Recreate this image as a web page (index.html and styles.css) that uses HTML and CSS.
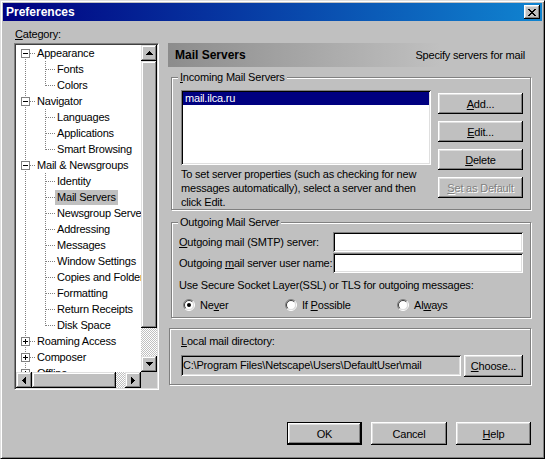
FILE: index.html
```html
<!DOCTYPE html>
<html lang="en">
<head>
  <meta charset="utf-8">
  <title>Preferences</title>
  <link rel="stylesheet" href="styles.css">
</head>
<body>
  <div class="window">
    <div class="titlebar">
      <span class="title">Preferences</span>
      <button class="close">
        <svg width="8" height="7" viewBox="0 0 8 7"><path d="M0 0h2v1H0zM6 0h2v1H6zM1 1h2v1H1zM5 1h2v1H5zM2 2h4v1H2zM3 3h2v1H3zM2 4h4v1H2zM1 5h2v1H1zM5 5h2v1H5zM0 6h2v1H0zM6 6h2v1H6z" fill="#000"/></svg>
      </button>
    </div>

    <div class="main">
      <div class="category">
        <div class="cat-label"><u>C</u>ategory:</div>
        <div class="tree">
          <div class="tree-view">
            <div class="node"><span class="rail first"><svg class="box" width="9" height="9"><rect x=".5" y=".5" width="8" height="8" fill="#fff" stroke="#808080"/><path d="M2 4.5h5" stroke="#000"/></svg><span class="dash"></span></span><span class="label">Appearance</span></div>
            <div class="node"><span class="rail"></span><span class="branch"><span class="dash"></span></span><span class="label">Fonts</span></div>
            <div class="node"><span class="rail"></span><span class="branch last"><span class="dash"></span></span><span class="label">Colors</span></div>
            <div class="node"><span class="rail"><svg class="box" width="9" height="9"><rect x=".5" y=".5" width="8" height="8" fill="#fff" stroke="#808080"/><path d="M2 4.5h5" stroke="#000"/></svg><span class="dash"></span></span><span class="label">Navigator</span></div>
            <div class="node"><span class="rail"></span><span class="branch"><span class="dash"></span></span><span class="label">Languages</span></div>
            <div class="node"><span class="rail"></span><span class="branch"><span class="dash"></span></span><span class="label">Applications</span></div>
            <div class="node"><span class="rail"></span><span class="branch last"><span class="dash"></span></span><span class="label">Smart Browsing</span></div>
            <div class="node"><span class="rail"><svg class="box" width="9" height="9"><rect x=".5" y=".5" width="8" height="8" fill="#fff" stroke="#808080"/><path d="M2 4.5h5" stroke="#000"/></svg><span class="dash"></span></span><span class="label">Mail &amp; Newsgroups</span></div>
            <div class="node"><span class="rail"></span><span class="branch"><span class="dash"></span></span><span class="label">Identity</span></div>
            <div class="node"><span class="rail"></span><span class="branch"><span class="dash"></span></span><span class="label selected">Mail Servers</span></div>
            <div class="node"><span class="rail"></span><span class="branch"><span class="dash"></span></span><span class="label">Newsgroup Servers</span></div>
            <div class="node"><span class="rail"></span><span class="branch"><span class="dash"></span></span><span class="label">Addressing</span></div>
            <div class="node"><span class="rail"></span><span class="branch"><span class="dash"></span></span><span class="label">Messages</span></div>
            <div class="node"><span class="rail"></span><span class="branch"><span class="dash"></span></span><span class="label">Window Settings</span></div>
            <div class="node"><span class="rail"></span><span class="branch"><span class="dash"></span></span><span class="label">Copies and Folders</span></div>
            <div class="node"><span class="rail"></span><span class="branch"><span class="dash"></span></span><span class="label">Formatting</span></div>
            <div class="node"><span class="rail"></span><span class="branch"><span class="dash"></span></span><span class="label">Return Receipts</span></div>
            <div class="node"><span class="rail"></span><span class="branch last"><span class="dash"></span></span><span class="label">Disk Space</span></div>
            <div class="node"><span class="rail"><svg class="box" width="9" height="9"><rect x=".5" y=".5" width="8" height="8" fill="#fff" stroke="#808080"/><path d="M2 4.5h5M4.5 2v5" stroke="#000"/></svg><span class="dash"></span></span><span class="label">Roaming Access</span></div>
            <div class="node"><span class="rail"><svg class="box" width="9" height="9"><rect x=".5" y=".5" width="8" height="8" fill="#fff" stroke="#808080"/><path d="M2 4.5h5M4.5 2v5" stroke="#000"/></svg><span class="dash"></span></span><span class="label">Composer</span></div>
            <div class="node"><span class="rail"><svg class="box" width="9" height="9"><rect x=".5" y=".5" width="8" height="8" fill="#fff" stroke="#808080"/><path d="M2 4.5h5M4.5 2v5" stroke="#000"/></svg><span class="dash"></span></span><span class="label">Offline</span></div>
          </div>

          <div class="vscroll">
            <div class="sb-btn"><svg width="7" height="4"><path d="M3 0h1v1h1v1h1v1h1v1H0V3h1V2h1V1h1z"/></svg></div>
            <div class="sb-thumb"></div>
            <div class="sb-track"></div>
            <div class="sb-btn"><svg width="7" height="4"><path d="M0 0h7v1H6v1H5v1H4v1H3V3H2V2H1V1H0z"/></svg></div>
          </div>
          <div class="hscroll">
            <div class="sb-btn"><svg width="4" height="7"><path d="M4 0v7H3V6H2V5H1V4H0V3h1V2h1V1h1V0z"/></svg></div>
            <div class="sb-thumb"></div>
            <div class="sb-track"></div>
            <div class="sb-btn"><svg width="4" height="7"><path d="M0 0h1v1h1v1h1v1h1v1H3v1H2v1H1v1H0z"/></svg></div>
          </div>
          <div class="sb-corner"></div>
        </div>
      </div>

      <div class="panel">
        <div class="panel-head">
          <b>Mail Servers</b>
          <span>Specify servers for mail</span>
        </div>

        <div class="group incoming">
          <div class="legend"><u>I</u>ncoming Mail Servers</div>
          <div class="incoming-body">
            <div class="incoming-left">
              <div class="listbox">
                <div class="list-item selected">mail.ilca.ru</div>
              </div>
              <p class="hint">To set server properties (such as checking for new<br>messages automatically), select a server and then<br>click Edit.</p>
            </div>
            <div class="side-buttons">
              <button class="btn"><u>A</u>dd...</button>
              <button class="btn"><u>E</u>dit...</button>
              <button class="btn"><u>D</u>elete</button>
              <button class="btn disabled"><u>S</u>et as Default</button>
            </div>
          </div>
        </div>

        <div class="group outgoing">
          <div class="legend">Outgoing Mail Server</div>
          <div class="field-row first-row">
            <span><u>O</u>utgoing mail (SMTP) server:</span>
            <span class="text-input"></span>
          </div>
          <div class="field-row">
            <span>Outgoing <u>m</u>ail server user name:</span>
            <span class="text-input"></span>
          </div>
          <div class="ssl">Use Secure Socket Layer(SSL) or TLS for outgoing messages:</div>
          <div class="radios">
            <span class="radio">
              <svg width="12" height="12"><circle cx="6" cy="6" r="4.5" fill="#fff"/><path d="M2.1 9.9A5.5 5.5 0 0 1 9.9 2.1" fill="none" stroke="#808080"/><path d="M9.9 2.1A5.5 5.5 0 0 1 2.1 9.9" fill="none" stroke="#fff"/><path d="M2.8 9.2A4.5 4.5 0 0 1 9.2 2.8" fill="none" stroke="#404040"/><path d="M9.2 2.8A4.5 4.5 0 0 1 2.8 9.2" fill="none" stroke="#dfdfdf"/><circle cx="6" cy="6" r="2" fill="#000"/></svg>
              <span>Ne<u>v</u>er</span>
            </span>
            <span class="radio">
              <svg width="12" height="12"><circle cx="6" cy="6" r="4.5" fill="#fff"/><path d="M2.1 9.9A5.5 5.5 0 0 1 9.9 2.1" fill="none" stroke="#808080"/><path d="M9.9 2.1A5.5 5.5 0 0 1 2.1 9.9" fill="none" stroke="#fff"/><path d="M2.8 9.2A4.5 4.5 0 0 1 9.2 2.8" fill="none" stroke="#404040"/><path d="M9.2 2.8A4.5 4.5 0 0 1 2.8 9.2" fill="none" stroke="#dfdfdf"/></svg>
              <span>If <u>P</u>ossible</span>
            </span>
            <span class="radio">
              <svg width="12" height="12"><circle cx="6" cy="6" r="4.5" fill="#fff"/><path d="M2.1 9.9A5.5 5.5 0 0 1 9.9 2.1" fill="none" stroke="#808080"/><path d="M9.9 2.1A5.5 5.5 0 0 1 2.1 9.9" fill="none" stroke="#fff"/><path d="M2.8 9.2A4.5 4.5 0 0 1 9.2 2.8" fill="none" stroke="#404040"/><path d="M9.2 2.8A4.5 4.5 0 0 1 2.8 9.2" fill="none" stroke="#dfdfdf"/></svg>
              <span>Al<u>w</u>ays</span>
            </span>
          </div>
        </div>

        <div class="group local">
          <div class="local-label"><u>L</u>ocal mail directory:</div>
          <div class="local-row">
            <span class="text-input readonly">C:\Program Files\Netscape\Users\DefaultUser\mail</span>
            <button class="btn choose"><u>C</u>hoose...</button>
          </div>
        </div>
      </div>
    </div>

    <div class="footer">
      <button class="btn big default">OK</button>
      <button class="btn big cancel">Cancel</button>
      <button class="btn big"><u>H</u>elp</button>
    </div>
  </div>
</body>
</html>
```

FILE: styles.css
```css
body {
  margin: 0;
  background: #c0c0c0;
  font-family: "Liberation Sans", Arial, sans-serif;
  font-size: 11px;
  letter-spacing: -0.2px;
  color: #000;
}

u { text-underline-offset: 1px; }

.window {
  width: 545px;
  height: 459px;
  box-sizing: border-box;
  display: flex;
  flex-direction: column;
  padding: 2px;
  background: #c0c0c0;
  border: 1px solid;
  border-color: #dfdfdf #000 #000 #dfdfdf;
  box-shadow: inset 1px 1px #fff, inset -1px -1px #808080;
}

/* Title bar */

.titlebar {
  flex: none;
  height: 18px;
  display: flex;
  align-items: center;
  justify-content: space-between;
  padding: 0 2px 0 3px;
  background: linear-gradient(to right, #000080, #1084d0);
  color: #fff;
}

.title {
  font-size: 12px;
  font-weight: bold;
  letter-spacing: 0;
}

.close {
  width: 16px;
  height: 14px;
  padding: 0;
  border: 0;
  display: flex;
  align-items: center;
  justify-content: center;
  background: #c0c0c0;
  box-shadow: inset -1px -1px #000, inset 1px 1px #fff, inset -2px -2px #808080, inset 2px 2px #dfdfdf;
}

/* Layout */

.main {
  display: flex;
  padding: 6px 11px 0;
}

.category {
  flex: none;
  width: 145px;
}

.cat-label {
  height: 14px;
  line-height: 14px;
  margin-bottom: 2px;
  padding-left: 1px;
}

/* Tree */

.tree {
  height: 347px;
  box-sizing: border-box;
  display: grid;
  grid-template-columns: 125px 16px;
  grid-template-rows: 327px 16px;
  padding: 1px;
  background: #fff;
  border: 1px solid;
  border-color: #808080 #fff #fff #808080;
  box-shadow: inset 1px 1px #404040, inset -1px -1px #dfdfdf;
}

.tree-view {
  overflow: hidden;
  white-space: nowrap;
  background: #fff;
}

.node {
  height: 16px;
  display: flex;
  align-items: center;
}

.rail,
.branch {
  flex: none;
  width: 20px;
  height: 16px;
  box-sizing: border-box;
  display: flex;
  align-items: center;
  background: linear-gradient(#808080 50%, transparent 50%) 9px 0 / 1px 2px repeat-y;
}

.rail { padding-left: 5px; }
.rail .box { flex: none; display: block; }

.rail.first {
  background:
    linear-gradient(#fff, #fff) 0 0 / 100% 4px no-repeat,
    linear-gradient(#808080 50%, transparent 50%) 9px 0 / 1px 2px repeat-y;
}

.branch { padding-left: 10px; }

.branch.last {
  background:
    linear-gradient(#fff, #fff) 0 9px / 100% 7px no-repeat,
    linear-gradient(#808080 50%, transparent 50%) 9px 0 / 1px 2px repeat-y;
}

.dash {
  height: 1px;
  width: 5px;
  background: linear-gradient(to right, #808080 50%, transparent 50%) 0 0 / 2px 1px repeat-x;
}

.branch .dash { width: 9px; }

.label {
  margin-left: -1px;
  padding: 1px 2px;
  line-height: 13px;
}

.label.selected { background: #c0c0c0; }

/* Scrollbars */

.vscroll {
  display: flex;
  flex-direction: column;
}

.hscroll { display: flex; }

.sb-btn,
.sb-thumb {
  flex: none;
  background: #c0c0c0;
  box-shadow: inset -1px -1px #000, inset 1px 1px #dfdfdf, inset -2px -2px #808080, inset 2px 2px #fff;
}

.sb-btn {
  width: 16px;
  height: 16px;
  display: flex;
  align-items: center;
  justify-content: center;
}

.sb-btn svg { display: block; }

.vscroll .sb-thumb { height: 267px; }
.hscroll .sb-thumb { width: 84px; }

.sb-track {
  flex: 1;
  background: repeating-conic-gradient(#c0c0c0 0 25%, #fff 0 50%) 0 0 / 2px 2px;
}

.sb-corner { background: #c0c0c0; }

/* Right panel */

.panel {
  flex: none;
  width: 363px;
  margin-left: 9px;
  padding-top: 16px;
  display: flex;
  flex-direction: column;
}

.panel-head {
  height: 24px;
  display: flex;
  align-items: center;
  justify-content: space-between;
  padding: 0 6px 0 7px;
  background: linear-gradient(to right, #8c8c8c, #a8a8a8 40%, #c0c0c0 75%);
}

.panel-head b {
  font-size: 12px;
  letter-spacing: 0;
}

.group {
  display: flex;
  flex-direction: column;
  border: 1px solid #808080;
  box-shadow: 1px 1px #fff, inset 1px 1px #fff;
}

.legend {
  align-self: flex-start;
  margin: -8px 0 0 6px;
  padding: 0 2px;
  line-height: 14px;
  background: #c0c0c0;
}

.incoming { margin: 10px 0 0 3px; }

.incoming-body {
  display: flex;
  gap: 7px;
  margin-top: 6px;
  padding: 0 7px 0 9px;
}

.incoming-left { width: 250px; }

.listbox {
  height: 75px;
  box-sizing: border-box;
  padding: 2px;
  background: #fff;
  box-shadow: inset 1px 1px #808080, inset -1px -1px #fff, inset 2px 2px #000, inset -2px -2px #dfdfdf;
}

.list-item {
  line-height: 13px;
  padding-left: 2px;
}

.list-item.selected {
  background: #000080;
  color: #fff;
}

.hint {
  margin: 2px 0 0;
  line-height: 14px;
  white-space: nowrap;
}

.side-buttons {
  width: 85px;
  display: flex;
  flex-direction: column;
  gap: 7px;
  padding-top: 3px;
}

/* Buttons */

.btn {
  height: 21px;
  padding: 0;
  border: 0;
  font: inherit;
  letter-spacing: inherit;
  color: #000;
  background: #c0c0c0;
  box-shadow: inset -1px -1px #000, inset 1px 1px #fff, inset -2px -2px #808080, inset 2px 2px #dfdfdf;
}

.btn.disabled {
  color: #808080;
  text-shadow: 1px 1px #fff;
}

.btn.big {
  width: 75px;
  height: 23px;
}

.btn.cancel { width: 76px; }

.btn.default {
  box-shadow: inset 0 0 0 1px #000, inset -2px -2px #000, inset 2px 2px #fff, inset -3px -3px #808080, inset 3px 3px #dfdfdf;
}

/* Outgoing */

.outgoing {
  margin: 12px 0 0 3px;
  padding: 0 7px 5px;
}

.outgoing .legend { margin-left: -1px; }

.field-row {
  height: 20px;
  margin-top: 1px;
  display: flex;
  align-items: center;
  justify-content: space-between;
}

.field-row.first-row { margin-top: 3px; }

.text-input {
  width: 190px;
  height: 20px;
  box-sizing: border-box;
  background: #fff;
  box-shadow: inset 1px 1px #808080, inset -1px -1px #fff, inset 2px 2px #000, inset -2px -2px #dfdfdf;
}

.ssl {
  margin-top: 5px;
  line-height: 14px;
}

.radios {
  margin-top: 6px;
  padding-left: 4px;
  display: grid;
  grid-template-columns: 102px 112px auto;
  line-height: 14px;
}

.radio {
  display: flex;
  align-items: center;
  gap: 5px;
}

.radio svg { flex: none; }

/* Local directory */

.local {
  margin: 10px 0 0 1px;
  padding: 5px 7px 7px 11px;
}

.local-label { line-height: 14px; }

.local-row {
  margin-top: 7px;
  display: flex;
  align-items: flex-start;
  gap: 3px;
}

.text-input.readonly {
  width: 280px;
  height: 21px;
  padding: 0 2px;
  line-height: 21px;
  white-space: nowrap;
  overflow: hidden;
  background: #c0c0c0;
}

.btn.choose {
  width: 59px;
  height: 22px;
}

/* Footer */

.footer {
  margin-top: auto;
  display: flex;
  justify-content: flex-end;
  gap: 9px;
  padding: 0 11px 11px;
}
```
